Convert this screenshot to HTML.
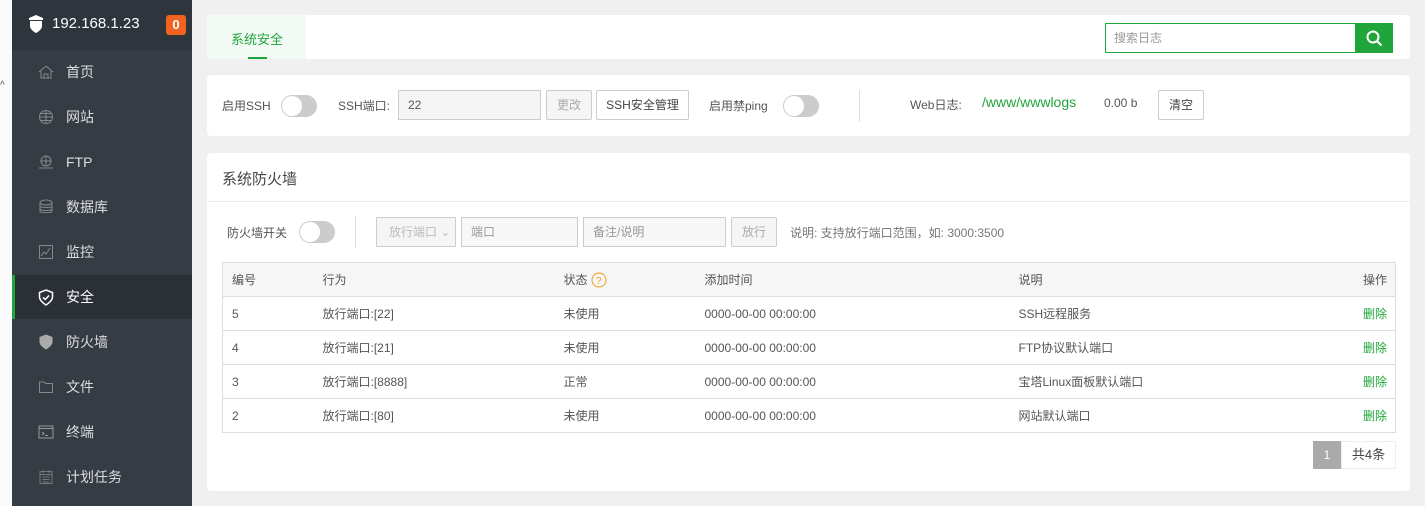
<!DOCTYPE html>
<html><head><meta charset="utf-8"><style>
*{box-sizing:border-box;margin:0;padding:0}
body{width:1425px;height:506px;overflow:hidden;background:#f0f0f0;font-family:"Liberation Sans","Noto Sans CJK SC",sans-serif;font-size:12px;color:#555;position:relative}
.abs{position:absolute}
.side{left:12px;top:0;width:180px;height:506px;background:#353c44}
.head{left:0;top:0;width:180px;height:50px;background:#2f353c;color:#fff;font-size:15px}
.item{position:absolute;left:0;width:180px;height:44px;color:#ddd;font-size:14px;line-height:44px;padding-left:54px}
.item svg{position:absolute;left:26px;top:14px}
.card{background:#fff;border-radius:4px;position:absolute}
.tog{position:absolute;width:36px;height:22px;border-radius:11px;background:#ccc}
.tog:after{content:"";position:absolute;left:1px;top:1px;width:20px;height:20px;border-radius:50%;background:#fff}
.inp{position:absolute;border:1px solid #ccc;background:#f5f5f5;height:30px;line-height:28px;padding-left:9px;color:#555}
.btn{position:absolute;border:1px solid #ccc;background:#fff;height:30px;line-height:28px;text-align:center;border-radius:2px;color:#444}
.t{position:absolute;white-space:nowrap}
table{position:absolute;left:222px;top:262px;width:1174px;border-collapse:collapse;border:1px solid #ddd}
td{height:34px;border-top:1px solid #ddd;padding:0;white-space:nowrap;color:#555}
tr:first-child td{background:#f6f6f6}
</style></head><body>
<div class="abs" style="left:0;top:0;width:12px;height:506px;background:#fafafa"></div>
<div class="abs" style="left:0;top:80px;font-size:10px;color:#555">^</div>
<div class="abs side">
 <div class="abs head">
  <svg class="abs" style="left:16px;top:15px" width="16" height="18" viewBox="0 0 16 18"><path d="M1 3 L8 0 L15 3 L15 5 L1 5Z" fill="#fff"/><path d="M2 6 H14 V11 C14 15 8 18 8 18 C8 18 2 15 2 11Z" fill="#fff"/></svg>
  <span class="t" style="left:40px;top:15px">192.168.1.23</span>
  <span class="abs" style="left:154px;top:15px;width:20px;height:20px;background:#f26322;border-radius:3px;text-align:center;line-height:20px;font-size:13px;font-weight:bold">0</span>
 </div>
 <div class="item" style="top:50px"><svg width="16" height="16" viewBox="0 0 16 16" fill="none" stroke="#888"><path d="M1 8 L8 2 L15 8 M3 7 V14 H13 V7 M6 14 V10 H10 V14"/></svg>首页</div>
 <div class="item" style="top:95px"><svg width="16" height="16" viewBox="0 0 16 16" fill="none" stroke="#888"><circle cx="8" cy="8" r="6.5"/><path d="M1.5 8H14.5M8 1.5V14.5M3 4.5H13M3 11.5H13"/></svg>网站</div>
 <div class="item" style="top:140px"><svg width="16" height="16" viewBox="0 0 16 16" fill="none" stroke="#888"><circle cx="8" cy="7" r="5"/><path d="M3 7H13M8 2V12M1 14H15"/></svg>FTP</div>
 <div class="item" style="top:185px"><svg width="16" height="16" viewBox="0 0 16 16" fill="none" stroke="#888"><ellipse cx="8" cy="3.5" rx="6" ry="2.5"/><path d="M2 3.5V12.5C2 14 14 14 14 12.5V3.5M2 7C2 9 14 9 14 7M2 10C2 12 14 12 14 10"/></svg>数据库</div>
 <div class="item" style="top:230px"><svg width="16" height="16" viewBox="0 0 16 16" fill="none" stroke="#888"><rect x="1.5" y="1.5" width="13" height="13"/><path d="M3 12L6 8L8 10L12 4"/></svg>监控</div>
 <div class="item" style="top:275px;background:#2b3037;color:#fff;border-left:3px solid #20a53a;padding-left:51px"><svg style="left:23px" width="16" height="17" viewBox="0 0 16 17" fill="none" stroke="#fff" stroke-width="1.5"><path d="M8 1L14.5 3.5V8C14.5 12 8 16 8 16C8 16 1.5 12 1.5 8V3.5Z"/><path d="M5 8.5L7.3 10.5L11 6.5"/></svg>安全</div>
 <div class="item" style="top:320px"><svg width="16" height="16" viewBox="0 0 16 16"><path d="M8 0.5L14.5 3V8C14.5 12 8 15.5 8 15.5C8 15.5 1.5 12 1.5 8V3Z" fill="#aaa"/></svg>防火墙</div>
 <div class="item" style="top:365px"><svg width="16" height="16" viewBox="0 0 16 16" fill="none" stroke="#888"><path d="M1.5 3H6L7.5 4.5H14.5V13.5H1.5Z"/></svg>文件</div>
 <div class="item" style="top:410px"><svg width="16" height="16" viewBox="0 0 16 16" fill="none" stroke="#999"><rect x="1" y="2" width="14" height="12"/><path d="M1 4.5H15M4 8L6 9.5L4 11M7 11.5H10"/></svg>终端</div>
 <div class="item" style="top:455px"><svg width="16" height="16" viewBox="0 0 16 16" fill="none" stroke="#777"><rect x="2" y="2.5" width="12" height="12"/><path d="M2 5.5H14M5 1V4M11 1V4M4.5 8H11.5M4.5 10.5H11.5M4.5 13H11.5"/></svg>计划任务</div>
</div>

<div class="card" style="left:207px;top:15px;width:1203px;height:44px">
 <div class="abs" style="left:0;top:0;width:99px;height:44px;background:#f3faf5;border-radius:4px 0 0 0"></div>
 <span class="t" style="left:24px;top:14px;color:#20a53a;font-size:13px">系统安全</span>
 <div class="abs" style="left:41px;top:42px;width:19px;height:2px;background:#20a53a"></div>
 <div class="abs" style="left:898px;top:8px;width:251px;height:30px;border:1px solid #20a53a;padding-left:8px;line-height:28px;color:#999">搜索日志</div>
 <div class="abs" style="left:1148px;top:8px;width:38px;height:30px;background:#20a53a"><svg style="position:absolute;left:11px;top:7px" width="17" height="17" viewBox="0 0 17 17" fill="none" stroke="#fff" stroke-width="2"><circle cx="7" cy="7" r="5.5"/><path d="M11 11L15.5 15.5"/></svg></div>
</div>

<div class="card" style="left:207px;top:75px;width:1203px;height:61px">
 <span class="t" style="left:15px;top:22px">启用SSH</span>
 <div class="tog" style="left:74px;top:20px"></div>
 <span class="t" style="left:131px;top:22px">SSH端口:</span>
 <div class="inp" style="left:191px;top:15px;width:143px">22</div>
 <div class="btn" style="left:339px;top:15px;width:46px;background:#f5f5f5;color:#aaa">更改</div>
 <div class="btn" style="left:389px;top:15px;width:93px">SSH安全管理</div>
 <span class="t" style="left:502px;top:22px">启用禁ping</span>
 <div class="tog" style="left:576px;top:20px"></div>
 <div class="abs" style="left:652px;top:15px;width:1px;height:32px;background:#ddd"></div>
 <span class="t" style="left:703px;top:21px">Web日志:</span>
 <span class="t" style="left:775px;top:19px;color:#20a53a;font-size:14px">/www/wwwlogs</span>
 <span class="t" style="left:897px;top:21px">0.00 b</span>
 <div class="btn" style="left:951px;top:15px;width:46px">清空</div>
</div>

<div class="card" style="left:207px;top:153px;width:1203px;height:338px">
 <span class="t" style="left:15px;top:15px;font-size:15px;color:#444">系统防火墙</span>
 <div class="abs" style="left:0;top:48px;width:1203px;height:1px;background:#eee"></div>
 <span class="t" style="left:20px;top:71px">防火墙开关</span>
 <div class="tog" style="left:92px;top:68px"></div>
 <div class="abs" style="left:148px;top:63px;width:1px;height:32px;background:#ddd"></div>
 <div class="inp" style="left:169px;top:64px;width:80px;color:#bbb;padding-left:12px">放行端口 ⌄</div>
 <div class="inp" style="left:254px;top:64px;width:117px;background:#f7f7f7;color:#999">端口</div>
 <div class="inp" style="left:376px;top:64px;width:143px;background:#f7f7f7;color:#999">备注/说明</div>
 <div class="btn" style="left:524px;top:64px;width:46px;background:#f5f5f5;color:#aaa">放行</div>
 <span class="t" style="left:583px;top:71px;color:#777">说明: 支持放行端口范围，如: 3000:3500</span>
 <div class="abs" style="left:1106px;top:288px;width:28px;height:28px;background:#aaa;color:#fff;text-align:center;line-height:28px">1</div>
 <div class="abs" style="left:1134px;top:288px;width:55px;height:28px;border:1px solid #eee;text-align:center;line-height:26px;font-size:13px;color:#444">共4条</div>
</div>

<table>
<tr><td style="padding-left:9px;width:100px">编号</td><td style="width:241px">行为</td><td style="width:141px">状态 <svg style="vertical-align:-4px" width="16" height="16" viewBox="0 0 16 16" fill="none" stroke="#f39c12"><circle cx="8" cy="8" r="7"/><text x="5" y="12" font-size="10" fill="#f39c12" stroke="none" font-family="Liberation Sans">?</text></svg></td><td style="width:314px">添加时间</td><td>说明</td><td style="text-align:right;padding-right:8px">操作</td></tr>
<tr><td style="padding-left:9px">5</td><td>放行端口:[22]</td><td>未使用</td><td>0000-00-00 00:00:00</td><td>SSH远程服务</td><td style="text-align:right;padding-right:8px;color:#20a53a">删除</td></tr>
<tr><td style="padding-left:9px">4</td><td>放行端口:[21]</td><td>未使用</td><td>0000-00-00 00:00:00</td><td>FTP协议默认端口</td><td style="text-align:right;padding-right:8px;color:#20a53a">删除</td></tr>
<tr><td style="padding-left:9px">3</td><td>放行端口:[8888]</td><td>正常</td><td>0000-00-00 00:00:00</td><td>宝塔Linux面板默认端口</td><td style="text-align:right;padding-right:8px;color:#20a53a">删除</td></tr>
<tr><td style="padding-left:9px">2</td><td>放行端口:[80]</td><td>未使用</td><td>0000-00-00 00:00:00</td><td>网站默认端口</td><td style="text-align:right;padding-right:8px;color:#20a53a">删除</td></tr>
</table>
</body></html>
